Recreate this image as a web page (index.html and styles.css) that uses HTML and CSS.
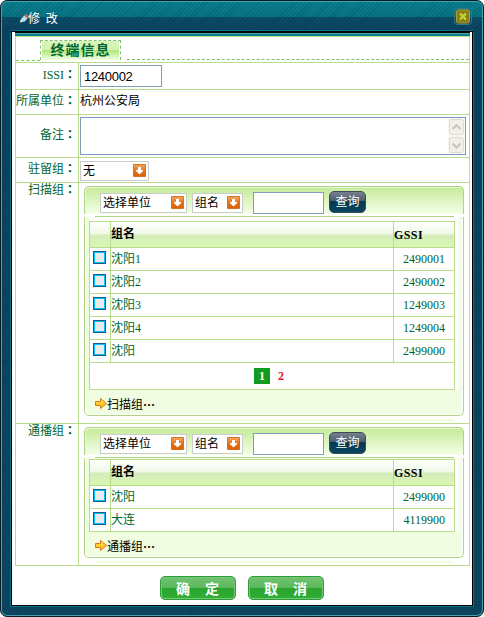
FILE: index.html
```html
<!DOCTYPE html>
<html lang="zh-CN">
<head>
<meta charset="utf-8">
<title>修改</title>
<link rel="stylesheet" href="styles.css">
</head>
<body>
<svg class="defs" width="0" height="0" aria-hidden="true">
  <defs>
    <linearGradient id="orange" x1="0" y1="0" x2="0" y2="1"><stop offset="0" stop-color="#f5a55c"/><stop offset=".5" stop-color="#e8741a"/><stop offset="1" stop-color="#d86000"/></linearGradient>
    <linearGradient id="gold" x1="0" y1="0" x2="0" y2="1"><stop offset="0" stop-color="#ffe65a"/><stop offset="1" stop-color="#ffb800"/></linearGradient>
    <symbol id="drop" viewBox="0 0 13 13"><rect width="13" height="13" rx="1" fill="#d4721f"/><rect x="1" y="1" width="11" height="11" fill="url(#orange)"/><path d="M5 3h3v3h2v1L6.500 10.500 3 7V6h2z" fill="#fff"/></symbol>
    <symbol id="arrow" viewBox="0 0 12 11"><path d="M.5 3.500h5v-3L11.500 5.500 5.500 10.500v-3h-5z" fill="url(#gold)" stroke="#d87a18"/></symbol>
  </defs>
</svg>
<div class="window">
  <header class="titlebar">
    <svg class="pencil" width="9" height="9" viewBox="0 0 9 9"><path d="M0 8.500 1 5l2.500 2.500z" fill="#fff"/><path d="M1 5 4.500 1.500 7.500 4.500 4 8z" fill="#b8e8ec"/><path d="M4.500 2 6.500 0l2.500 2.500-2 2z" fill="#e0604f"/></svg>
    <h1>修 改</h1>
    <svg class="close" width="18" height="17" viewBox="0 0 18 17"><rect x=".5" y=".5" width="17" height="16" rx="3" fill="none" stroke="#2b7d84"/><rect x="2.500" y="2" width="13" height="13" rx="2" fill="#8c7a20" stroke="#b0a028"/><path d="M6 5.500l6 6M12 5.500l-6 6" stroke="#b8dc30" stroke-width="2.400"/></svg>
  </header>
  <main class="content">
    <div class="topline"></div>
    <div class="form">
      <div class="tabs"><i class="dash-left"></i><h2>终端信息</h2><i class="dash-right"></i></div>
      <div class="row r-issi"><label>ISSI<em lang="zh-TW">：</em></label><div class="cell"><div class="field issi">1240002</div></div></div>
      <div class="row r-unit"><label>所属单位<em lang="zh-TW">：</em></label><div class="cell">杭州公安局</div></div>
      <div class="row r-note"><label>备注<em lang="zh-TW">：</em></label><div class="cell"><div class="field note"><div class="scroll"><svg width="15" height="17" viewBox="0 0 15 17"><rect x=".5" y=".5" width="14" height="15" rx="2" fill="#f1f0e9" stroke="#dddbcf"/><path d="M3.500 10 7.500 6l4 4" fill="none" stroke="#c6c5b9" stroke-width="2"/></svg><svg width="15" height="17" viewBox="0 0 15 17"><rect x=".5" y=".5" width="14" height="15" rx="2" fill="#f1f0e9" stroke="#dddbcf"/><path d="M3.500 6.500l4 4 4-4" fill="none" stroke="#c6c5b9" stroke-width="2"/></svg></div></div></div></div>
      <div class="row r-stay"><label>驻留组<em lang="zh-TW">：</em></label><div class="cell"><div class="select s-stay"><span>无</span><svg width="13" height="13"><use href="#drop"/></svg></div></div></div>
      <div class="row r-group first"><label>扫描组<em lang="zh-TW">：</em></label><div class="cell">
        <section class="panel">
          <div class="filter"><div class="select s-unit"><span>选择单位</span><svg width="13" height="13"><use href="#drop"/></svg></div><div class="select s-name"><span>组名</span><svg width="13" height="13"><use href="#drop"/></svg></div><div class="field query"></div><button class="search">查询</button></div>
          <div class="rule"></div>
          <div class="body">
            <div class="grid">
              <div class="tr th"><i></i><b>组名</b><b class="gssi">GSSI</b></div>
              <div class="tr"><i><u></u></i><span>沈阳1</span><span class="num">2490001</span></div>
              <div class="tr"><i><u></u></i><span>沈阳2</span><span class="num">2490002</span></div>
              <div class="tr"><i><u></u></i><span>沈阳3</span><span class="num">1249003</span></div>
              <div class="tr"><i><u></u></i><span>沈阳4</span><span class="num">1249004</span></div>
              <div class="tr"><i><u></u></i><span>沈阳</span><span class="num">2499000</span></div>
              <div class="pager"><b class="on">1</b><b>2</b></div>
            </div>
            <div class="more"><svg width="12" height="11"><use href="#arrow"/></svg>扫描组<em lang="zh-TW">…</em></div>
          </div>
          <div class="strip"></div>
        </section>
      </div></div>
      <div class="row r-group second"><label>通播组<em lang="zh-TW">：</em></label><div class="cell">
        <section class="panel">
          <div class="filter"><div class="select s-unit"><span>选择单位</span><svg width="13" height="13"><use href="#drop"/></svg></div><div class="select s-name"><span>组名</span><svg width="13" height="13"><use href="#drop"/></svg></div><div class="field query"></div><button class="search">查询</button></div>
          <div class="rule"></div>
          <div class="body">
            <div class="grid">
              <div class="tr th"><i></i><b>组名</b><b class="gssi">GSSI</b></div>
              <div class="tr"><i><u></u></i><span>沈阳</span><span class="num">2499000</span></div>
              <div class="tr"><i><u></u></i><span>大连</span><span class="num">4119900</span></div>
            </div>
            <div class="more"><svg width="12" height="11"><use href="#arrow"/></svg>通播组<em lang="zh-TW">…</em></div>
          </div>
          <div class="strip"></div>
        </section>
      </div></div>
    </div>
    <div class="actions"><button>确<span>定</span></button><button>取<span>消</span></button></div>
  </main>
</div>
</body>
</html>
```

FILE: styles.css
```css
* { box-sizing: border-box; }
body { margin: 0; background: #fff; font: 12px/16px "Liberation Serif", "Noto Sans CJK SC", serif; color: #000; overflow: hidden; }
h1, h2 { margin: 0; }
svg { display: block; flex: none; }
.defs { position: absolute; }
button { font-family: "Liberation Sans", "Noto Sans CJK SC", sans-serif; padding: 0; margin: 0; }
em { font: bold 12px/1 "Noto Sans CJK TC", sans-serif; }

.window {
  width: 484px; height: 617px; border: 1px solid #031d2b; border-radius: 7px;
  box-shadow: inset 0 0 0 1px #4a9fab;
  background:
    repeating-linear-gradient(135deg, rgba(0,20,40,.16) 0 1px, transparent 1px 3px),
    linear-gradient(#0a8090 0, #087484 16px, #0b4d69 16px, #0b4460 30px, #0c4762 100%);
  padding: 0 10px 10px;
}
.titlebar { height: 31px; display: flex; align-items: flex-start; padding: 0 1px 0 9px; border-bottom: 1px solid #000; box-shadow: inset 0 -1px #08708a; }
.pencil { margin-top: 13px; }
.titlebar h1 { font: 12px/16px "Noto Sans CJK SC", sans-serif; color: #fff; margin: 9px 0 0 -1px; word-spacing: 3px; }
.close { margin: 7px 0 0 auto; }

.content { height: 574px; border: 1px solid #000; border-top: 0; background: #fff; padding: 0 2px 0 3px; outline: 1px solid #08707f; clip-path: inset(0 -1px -1px -1px); }
.topline { height: 4px; border-top: 1px solid #000; background: linear-gradient(#4aa7ad 1px, #088088 1px); }
.form { width: 455px; border: 1px solid #b9dc8c; border-bottom: 0; }

.tabs { height: 26px; border-bottom: 1px solid #b9dc8c; display: flex; align-items: flex-start; }
.dash-left { width: 24px; height: 24px; border-bottom: 1px dashed #7fbe78; }
.dash-right { flex: 1; margin-left: 6px; height: 23px; border-bottom: 1px dashed #7fbe78; }
.tabs h2 { width: 81px; height: 20px; margin-top: 3px; border: 1px dashed #7fbe78; border-bottom: 0; padding: 0 1px; font: bold 14px/17px "Noto Sans CJK SC", sans-serif; color: #006633; text-align: center; letter-spacing: 1px;
  background: linear-gradient(#d8f5b8 0, #d2f2ac 9px, #aee878 9px, #e9fbd8 18px, #fff 20px) content-box; }

.row { display: flex; border-bottom: 1px solid #b9dc8c; }
.row > label { width: 63px; flex: none; border-right: 1px solid #b9dc8c; color: #006633; text-align: right; white-space: nowrap; padding-right: 2px; }
.cell { flex: 1; min-width: 0; padding-left: 1px; }
.r-issi { height: 27px; } .r-issi label { line-height: 25px; } .r-issi .cell { padding-top: 2px; }
.r-unit { height: 25px; line-height: 23px; }
.r-note { height: 43px; } .r-note label { line-height: 40px; } .r-note .cell { padding-top: 2px; }
.r-stay { height: 25px; } .r-stay label { line-height: 22px; } .r-stay .cell { padding-top: 3px; }
.first { height: 241px; } .second { height: 142px; }
.r-group > label { line-height: 14px; }

.field { background: #fff; border: 1px solid #7f9db9; }
.issi { width: 82px; height: 22px; padding-left: 3px; font: 13px/21px "Liberation Sans", sans-serif; letter-spacing: -.3px; }
.note { width: 386px; height: 38px; display: flex; justify-content: flex-end; }
.scroll { width: 17px; padding: 1px; display: flex; flex-direction: column; gap: 1px; background: #f8f7f3; }

.select { height: 20px; border: 1px solid #ccc; background: #fff; display: flex; align-items: center; justify-content: space-between; padding: 0 2px; line-height: 18px; white-space: nowrap; }
.select svg { margin-top: -1px; }
.s-stay { width: 69px; }
.s-unit { width: 87px; }
.s-name { width: 51px; margin-left: 5px; }
.query { width: 71px; height: 22px; margin-left: 10px; margin-top: -1px; }
.search { width: 37px; height: 22px; margin: -2px 0 0 5px; border: 1px solid #3c4a58; border-radius: 5px; color: #fff; font-size: 12px; line-height: 20px; background: linear-gradient(#76808f, #4c5c70 9px, #033a52 9px, #0a4560); }

.r-group .cell { padding: 3px 0 0 5px; }
.panel { width: 380px; }
.filter { height: 28px; border: 1px solid #b0d38a; border-bottom: 0; border-radius: 5px 5px 0 0; padding: 6px 0 0 15px; display: flex; align-items: flex-start; background: linear-gradient(#c5ea98, #f4ffe8); box-shadow: inset 1px 1px #e8f8d0; }
.rule { height: 3px; margin: 0 10px 0 11px; border-bottom: 1px solid #b0d38a; }
.body { border: 1px solid #b0d38a; border-top: 0; border-radius: 0 0 5px 5px; padding-left: 4px; background: #f0fde0; box-shadow: inset 1px 0 #fff, inset -1px -1px #fff; }
.first .body { height: 199px; padding-top: 4px; }
.second .body { height: 100px; padding-top: 1px; }
.grid { width: 366px; border: 1px solid #b9dc8c; border-bottom: 0; background: #fff; box-shadow: 4px 0 #fff; }
.first .grid { box-shadow: 4px 0 #fff, 4px -4px #fff, 0 -4px #fff; }
.tr { height: 23px; display: grid; grid-template-columns: 20px 283px 61px; border-bottom: 1px solid #b9dc8c; color: #006633; line-height: 23px; }
.tr > * { height: 100%; overflow: hidden; }
.tr > * + * { border-left: 1px solid #b9dc8c; }
.tr i { padding: 3px 0 0 3px; }
.tr u { display: block; width: 13px; height: 13px; border: 1px solid #1d5b7a; background: #ebebeb; box-shadow: inset 0 0 0 1px #08bfff; }
.th { height: 26px; color: #000; line-height: 25px; background: linear-gradient(#fff, #eff9e6 12px, #d5ebbd 13px, #d8f8b0 100%); }
.tr .gssi { line-height: 26px; letter-spacing: .4px; }
.tr .num { text-align: right; padding-right: 9px; line-height: 22px; }
.pager { height: 27px; border-bottom: 1px solid #b9dc8c; display: flex; justify-content: center; padding: 5px 4px 0 0; color: #f01030; }
.pager b { width: 16px; height: 16px; text-align: center; margin-left: 3px; }
.pager .on { background: #119b20; color: #fff; }
.more { display: flex; height: 24px; padding-left: 6px; align-items: center; padding-top: 5px; }
.more svg { margin-top: -2px; }
.strip { height: 2px; margin: 3px 10px 0 11px; background: #f0fde0; }

.actions { display: flex; justify-content: center; gap: 12px; padding: 10px 2px 0 0; }
.actions button { width: 76px; height: 24px; border: 1px solid #2a9c38; border-radius: 5px; background: linear-gradient(#72c272, #5cb85c 11px, #2ba52f 11px, #2fae35); box-shadow: inset 0 0 0 1px #79c87a; color: #fff; font: bold 14px/20px "Noto Sans CJK SC", sans-serif; }
.actions span { margin-left: 15px; }
```
